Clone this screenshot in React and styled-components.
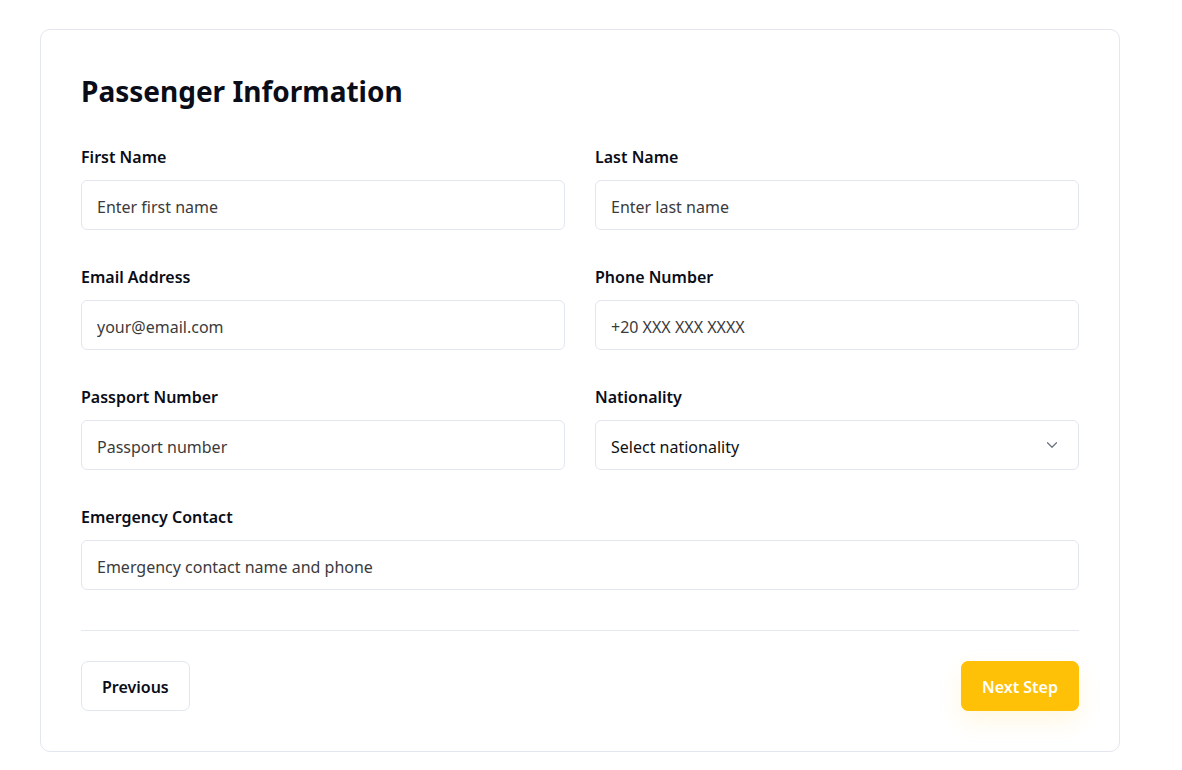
import React from "react";
import styled, { createGlobalStyle } from "styled-components";

const Global = createGlobalStyle`
  html, body { margin: 0; padding: 0; background: #ffffff; }
  body { font-family: "Segoe UI", "Noto Sans", sans-serif; color: #0b0f1a; }
  * { box-sizing: border-box; }
`;

const Page = styled.div`
  padding: 29px 0 0 40px;
`;

const Card = styled.section`
  width: 1080px;
  background: #fff;
  border: 1px solid #e3e6ee;
  border-radius: 10px;
  padding: 39px 40px 40px;
`;

const Title = styled.h2`
  margin: 0 0 32px;
  font-size: 28px;
  line-height: 44px;
  font-weight: 700;
  color: #0a0d18;
`;

const Grid = styled.div`
  display: grid;
  grid-template-columns: 1fr 1fr;
  column-gap: 30px;
  row-gap: 35px;
`;

const Field = styled.div`
  display: flex;
  flex-direction: column;
  grid-column: ${(p) => (p.$full ? "1 / -1" : "auto")};
`;

const Label = styled.label`
  font-size: 16px;
  font-weight: 600;
  line-height: 24px;
  color: #0a0d18;
  margin-bottom: 11px;
`;

const Input = styled.input`
  height: 50px;
  width: 100%;
  border: 1px solid #e2e6ef;
  border-radius: 6px;
  padding: 3px 15px 0;
  font-family: inherit;
  font-size: 16px;
  color: #222;
  background: #fff;
  outline: none;
  &::placeholder { color: #3b3b3b; opacity: 1; }
`;

const SelectWrap = styled.div`
  position: relative;
`;

const Select = styled.select`
  appearance: none;
  height: 50px;
  width: 100%;
  border: 1px solid #e2e6ef;
  border-radius: 6px;
  padding: 3px 15px 0;
  font-family: inherit;
  font-size: 16px;
  color: #111;
  background: #fff;
  outline: none;
`;

const Chevron = styled.svg`
  position: absolute;
  right: 18px;
  top: 50%;
  transform: translateY(-50%);
  pointer-events: none;
`;

const Divider = styled.hr`
  border: none;
  border-top: 1px solid #e5e8f0;
  margin: 40px 0 30px;
`;

const Actions = styled.div`
  display: flex;
  justify-content: space-between;
  align-items: center;
`;

const Button = styled.button`
  height: 50px;
  padding: 1px 20px 0;
  border-radius: 7px;
  font-family: inherit;
  font-size: 16px;
  font-weight: 600;
  cursor: pointer;
  border: 1px solid ${(p) => (p.$primary ? "#ffc107" : "#e2e6ef")};
  background: ${(p) => (p.$primary ? "#ffc107" : "#fff")};
  color: ${(p) => (p.$primary ? "#fff" : "#0a0d18")};
  box-shadow: ${(p) => (p.$primary ? "0 10px 24px rgba(255, 193, 7, 0.12)" : "none")};
`;

const fields = [
  { label: "First Name", placeholder: "Enter first name" },
  { label: "Last Name", placeholder: "Enter last name" },
  { label: "Email Address", placeholder: "your@email.com" },
  { label: "Phone Number", placeholder: "+20 XXX XXX XXXX" },
  { label: "Passport Number", placeholder: "Passport number" },
];

export default function App() {
  return (
    <Page>
      <Global />
      <Card>
        <Title>Passenger Information</Title>
        <Grid>
          {fields.map((f) => (
            <Field key={f.label}>
              <Label>{f.label}</Label>
              <Input placeholder={f.placeholder} />
            </Field>
          ))}
          <Field>
            <Label>Nationality</Label>
            <SelectWrap>
              <Select defaultValue="">
                <option value="">Select nationality</option>
              </Select>
              <Chevron width="18" height="18" viewBox="0 0 24 24" fill="none" stroke="#6b7280" strokeWidth="1.6" strokeLinecap="round" strokeLinejoin="round">
                <path d="M6 9l6 6 6-6" />
              </Chevron>
            </SelectWrap>
          </Field>
          <Field $full>
            <Label>Emergency Contact</Label>
            <Input placeholder="Emergency contact name and phone" />
          </Field>
        </Grid>
        <Divider />
        <Actions>
          <Button>Previous</Button>
          <Button $primary>Next Step</Button>
        </Actions>
      </Card>
    </Page>
  );
}
